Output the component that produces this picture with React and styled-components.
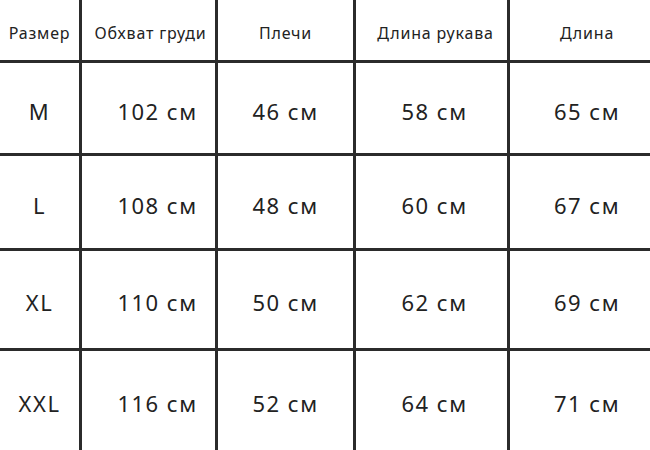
import React from 'react';
import styled, { createGlobalStyle } from 'styled-components';

const GlobalStyle = createGlobalStyle`
  html, body {
    margin: 0;
    padding: 0;
    background: #ffffff;
  }
  body {
    font-family: 'Noto Sans', 'DejaVu Sans', sans-serif;
  }
`;

const Table = styled.div`
  width: 650px;
  height: 450px;
  display: grid;
  grid-template-columns: 79px 133px 135px 151px 140px;
  grid-template-rows: 60px 90px 92px 97px 99px;
  gap: 3px;
  background: #2b2b2b;
  overflow: hidden;
`;

const Cell = styled.div`
  background: #ffffff;
  display: flex;
  align-items: center;
  justify-content: center;
  color: #222222;
  font-size: ${p => (p.$head ? '16px' : '22px')};
  padding-top: ${p => (p.$head ? '6px' : '5px')};
  padding-left: ${p => p.$shift || 0}px;
  white-space: nowrap;
  letter-spacing: ${p => (p.$head ? '0.8px' : '1.5px')};
`;

const headers = ['Размер', 'Обхват груди', 'Плечи', 'Длина рукава', 'Длина'];

const rows = [
  ['M', '102 см', '46 см', '58 см', '65 см'],
  ['L', '108 см', '48 см', '60 см', '67 см'],
  ['XL', '110 см', '50 см', '62 см', '69 см'],
  ['XXL', '116 см', '52 см', '64 см', '71 см'],
];

// small horizontal nudges so text sits where it does in the chart
const headShifts = [0, 4, 0, 8, 14];
const bodyShifts = [0, 18, 0, 6, 14];

export default function App() {
  return (
    <>
      <GlobalStyle />
      <Table>
        {headers.map((h, i) => (
          <Cell $head key={h} $shift={headShifts[i]}>
            {h}
          </Cell>
        ))}
        {rows.map(row =>
          row.map((v, i) => (
            <Cell key={row[0] + i} $shift={bodyShifts[i]}>
              {v}
            </Cell>
          ))
        )}
      </Table>
    </>
  );
}
